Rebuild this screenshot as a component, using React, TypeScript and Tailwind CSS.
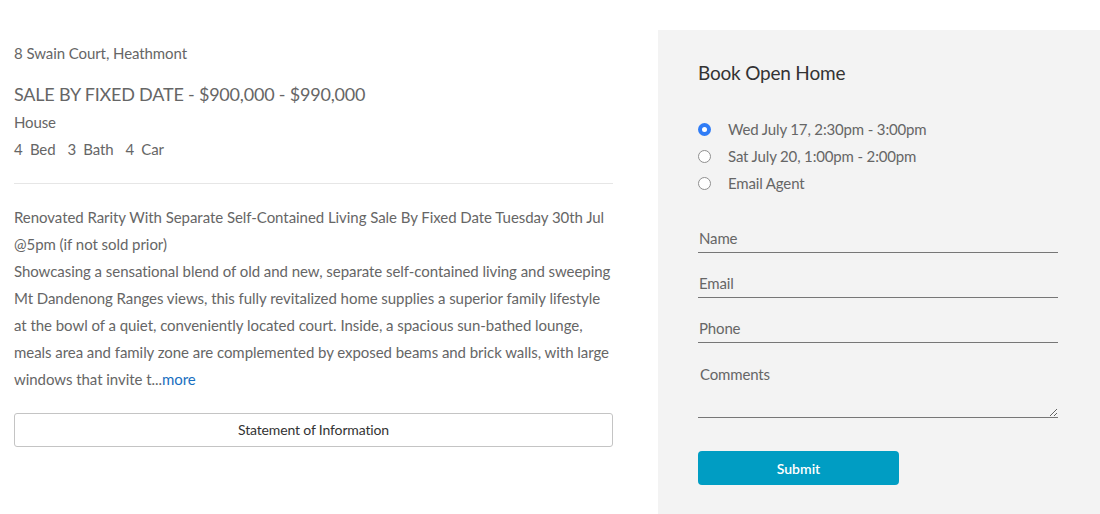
const slots = [
    { id: "wed", label: "Wed July 17, 2:30pm - 3:00pm" },
    { id: "sat", label: "Sat July 20, 1:00pm - 2:00pm" },
    { id: "agent", label: "Email Agent" },
]

const Radio = ({ checked }: { checked: boolean }) => (
    checked ? (
        <span className="flex h-[13px] w-[13px] items-center justify-center rounded-full bg-[#2f7cf6]">
            <span className="h-[5px] w-[5px] rounded-full bg-white" />
        </span>
    ) : (
        <span className="h-[13px] w-[13px] rounded-full border border-[#8f8f8f] bg-white" />
    )
)

const Field = ({ label }: { label: string }) => (
    <input
        placeholder={label}
        className="block h-[30px] w-full border-b border-[#767676] bg-transparent px-[1px] text-[15px] tracking-[-0.15px] text-[#333] placeholder:text-[#666] outline-none"
    />
)

const App = () => {
    return (
        <div className="flex min-h-[514px] bg-white font-['Lato','Liberation_Sans',sans-serif]">
            {/* listing details */}
            <div className="ml-[14px] w-[599px] pt-[42px] text-[#666] tracking-[-0.15px]">
                <p className="text-[15px] leading-[22px] tracking-[-0.08px]">8 Swain Court, Heathmont</p>
                <h2 className="mt-[18px] text-[18px] leading-[24px] tracking-[-0.2px]">SALE BY FIXED DATE - $900,000 - $990,000</h2>
                <p className="mt-[3px] text-[15px] leading-[27px]">House</p>
                <div className="flex gap-[12px] text-[15px] leading-[27px]">
                    <span>4&nbsp;&nbsp;Bed</span>
                    <span>3&nbsp;&nbsp;Bath</span>
                    <span>4&nbsp;&nbsp;Car</span>
                </div>
                <div className="mt-[20px] border-t border-[#e6e6e6]" />
                <div className="mt-[20px] text-[15px] leading-[27px] tracking-[-0.05px]">
                    <p>Renovated Rarity With Separate Self-Contained Living Sale By Fixed Date Tuesday 30th Jul @5pm (if not sold prior)</p>
                    <p>
                        Showcasing a sensational blend of old and new, separate self-contained living and sweeping Mt Dandenong Ranges views, this fully revitalized home supplies a superior family lifestyle at the bowl of a quiet, conveniently located court. Inside, a spacious sun-bathed lounge, meals area and family zone are complemented by exposed beams and brick walls, with large windows that invite t...
                        <a href="#" className="text-[#1a6fc0]">more</a>
                    </p>
                </div>
                <button className="mt-[20px] h-[34px] w-full rounded-[3px] border border-[#c4c4c4] bg-white text-[14px] leading-[32px] text-[#333]">
                    Statement of Information
                </button>
            </div>

            {/* booking panel */}
            <div className="ml-[45px] mt-[30px] w-[442px] bg-[#f3f3f3] pl-[40px] pr-[42px] pt-[30px] pb-[28px]">
                <h3 className="text-[19px] leading-[26px] tracking-[-0.2px] text-[#333]">Book Open Home</h3>
                <div className="mt-[30px] flex flex-col">
                    {slots.map((slot, i) => (
                        <label key={slot.id} className="flex items-center gap-[17px] text-[15px] leading-[27px] tracking-[-0.15px] text-[#666]">
                            <Radio checked={i === 0} />
                            {slot.label}
                        </label>
                    ))}
                </div>
                <div className="mt-[26px] flex flex-col gap-[15px]">
                    <Field label="Name" />
                    <Field label="Email" />
                    <Field label="Phone" />
                    <textarea
                        placeholder="Comments"
                        className="block h-[60px] w-full resize-y border-b border-[#767676] bg-transparent px-[2px] pt-[7px] text-[15px] leading-[18px] tracking-[-0.15px] text-[#333] placeholder:text-[#666] outline-none"
                    />
                </div>
                <button className="mt-[33px] h-[34px] w-[201px] rounded-[4px] bg-[#009dc3] text-[14px] font-semibold text-white">
                    Submit
                </button>
            </div>
        </div>
    )
}

export default App
